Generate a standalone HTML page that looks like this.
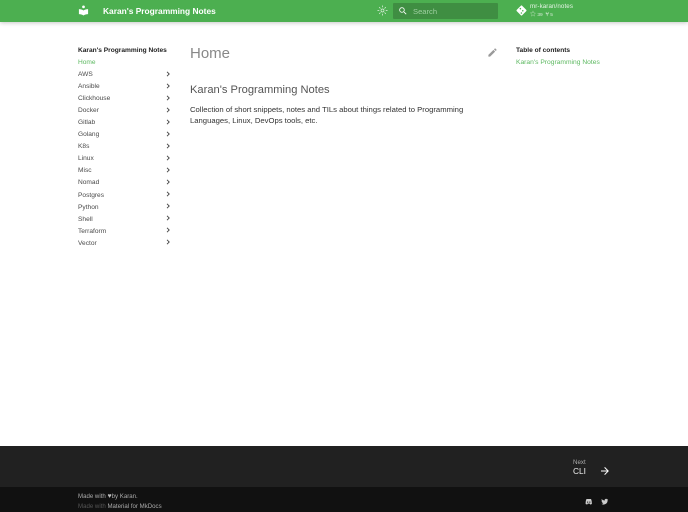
<!DOCTYPE html>
<html><head><meta charset="utf-8"><style>
html,body{margin:0;padding:0;width:688px;height:512px;overflow:hidden;background:#fff}
body{font-family:"Liberation Sans","Noto Sans CJK SC",sans-serif;position:relative}
.a{position:absolute;white-space:nowrap;line-height:12px}
.n{font-size:6.600px;color:#4a4a4a;left:78px}
svg{position:absolute}
.c{left:166px;width:4px;height:6px}
</style></head><body>
<div class="a" style="left:0;top:0;width:688px;height:22px;background:#4caf50;box-shadow:0 1px 4px rgba(0,0,0,.22)"></div>
<svg style="left:78px;top:5px" width="11" height="11" viewBox="0 0 24 24"><circle cx="12" cy="4" r="3" fill="#fff"/><path fill="#fff" d="M2 9c4 0 7 1 10 3 3-2 6-3 10-3v11c-4 0-7 1-10 3-3-2-6-3-10-3z"/></svg>
<div class="a" style="left:103px;top:5px;font-size:8.400px;font-weight:700;color:#fff;line-height:12px">Karan's Programming Notes</div>
<svg style="left:377px;top:5px" width="11" height="11" viewBox="0 0 24 24"><path fill="#e3f2e3" d="M12 8a4 4 0 1 0 0 8 4 4 0 0 0 0-8zm0 6.500a2.500 2.500 0 1 1 0-5 2.500 2.500 0 0 1 0 5zM11.200 1h1.600v4h-1.600zM11.200 19h1.600v4h-1.600zM1 11.200h4v1.600H1zM19 11.200h4v1.600h-4zM4.200 5.300l1.100-1.100 2.800 2.800-1.100 1.100zM15.900 17l1.100-1.100 2.800 2.800-1.100 1.100zM4.200 18.700L7 15.900 8.100 17l-2.800 2.800zM15.900 7l2.800-2.800 1.100 1.100L17 8.100z"/></svg>
<div class="a" style="left:393px;top:3px;width:105px;height:16px;background:#3f8e42;border-radius:1px"></div>
<svg style="left:398px;top:6px" width="10" height="10" viewBox="0 0 24 24"><path fill="#fff" d="M9.500 3A6.500 6.500 0 0 1 16 9.500c0 1.600-.6 3.100-1.600 4.200l.3.300h.8l5 5-1.500 1.500-5-5v-.8l-.3-.3A6.500 6.500 0 1 1 9.500 3zm0 2a4.500 4.500 0 1 0 0 9 4.500 4.500 0 0 0 0-9z"/></svg>
<div class="a" style="left:413px;top:5.500px;font-size:7.600px;color:#9fcfa1">Search</div>
<svg style="left:516px;top:5px" width="11" height="11" viewBox="0 0 24 24"><path fill="#fff" fill-rule="evenodd" d="M13.400 1.600a2 2 0 0 0-2.800 0l-9 9a2 2 0 0 0 0 2.800l9 9a2 2 0 0 0 2.800 0l9-9a2 2 0 0 0 0-2.800zM9.500 6.300a1.700 1.700 0 1 1 0 3.400 1.700 1.700 0 0 1 0-3.400zM11.800 15.800a1.700 1.700 0 1 1 0 3.400 1.700 1.700 0 0 1 0-3.400zM14.800 10.800a1.700 1.700 0 1 1 0 3.400 1.700 1.700 0 0 1 0-3.400z"/></svg>
<div class="a" style="left:530px;top:1px;font-size:6.200px;color:#e6f3e6;letter-spacing:.1px">mr-karan/notes</div>
<div class="a" style="left:530px;top:9px;font-size:4.800px;color:#d5ead5"><span style="font-size:6px">☆</span> 39 &nbsp;<b style="font-size:6px">⑂</b> 5</div>

<div class="a" style="left:78px;top:45px;font-size:6.600px;font-weight:700;color:#222">Karan's Programming Notes</div>
<div class="a n" style="top:57px;color:#5cb860">Home</div>
<div class="a n" style="top:69px">AWS</div>
<div class="a n" style="top:81px">Ansible</div>
<div class="a n" style="top:93px">Clickhouse</div>
<div class="a n" style="top:105px">Docker</div>
<div class="a n" style="top:117px">Gitlab</div>
<div class="a n" style="top:129px">Golang</div>
<div class="a n" style="top:141px">K8s</div>
<div class="a n" style="top:153px">Linux</div>
<div class="a n" style="top:165.400px">Misc</div>
<div class="a n" style="top:177.400px">Nomad</div>
<div class="a n" style="top:189.600px">Postgres</div>
<div class="a n" style="top:201.600px">Python</div>
<div class="a n" style="top:213.800px">Shell</div>
<div class="a n" style="top:225.800px">Terraform</div>
<div class="a n" style="top:238px">Vector</div>
<svg class="c" style="top:70.500px" viewBox="0 0 4 6"><path d="M1 .8L3.200 3 1 5.200" fill="none" stroke="#444" stroke-width=".9"/></svg>
<svg class="c" style="top:82.500px" viewBox="0 0 4 6"><path d="M1 .8L3.200 3 1 5.200" fill="none" stroke="#444" stroke-width=".9"/></svg>
<svg class="c" style="top:94.600px" viewBox="0 0 4 6"><path d="M1 .8L3.200 3 1 5.200" fill="none" stroke="#444" stroke-width=".9"/></svg>
<svg class="c" style="top:106.600px" viewBox="0 0 4 6"><path d="M1 .8L3.200 3 1 5.200" fill="none" stroke="#444" stroke-width=".9"/></svg>
<svg class="c" style="top:118.700px" viewBox="0 0 4 6"><path d="M1 .8L3.200 3 1 5.200" fill="none" stroke="#444" stroke-width=".9"/></svg>
<svg class="c" style="top:130.700px" viewBox="0 0 4 6"><path d="M1 .8L3.200 3 1 5.200" fill="none" stroke="#444" stroke-width=".9"/></svg>
<svg class="c" style="top:142.800px" viewBox="0 0 4 6"><path d="M1 .8L3.200 3 1 5.200" fill="none" stroke="#444" stroke-width=".9"/></svg>
<svg class="c" style="top:154.800px" viewBox="0 0 4 6"><path d="M1 .8L3.200 3 1 5.200" fill="none" stroke="#444" stroke-width=".9"/></svg>
<svg class="c" style="top:166.900px" viewBox="0 0 4 6"><path d="M1 .8L3.200 3 1 5.200" fill="none" stroke="#444" stroke-width=".9"/></svg>
<svg class="c" style="top:178.900px" viewBox="0 0 4 6"><path d="M1 .8L3.200 3 1 5.200" fill="none" stroke="#444" stroke-width=".9"/></svg>
<svg class="c" style="top:191px" viewBox="0 0 4 6"><path d="M1 .8L3.200 3 1 5.200" fill="none" stroke="#444" stroke-width=".9"/></svg>
<svg class="c" style="top:203px" viewBox="0 0 4 6"><path d="M1 .8L3.200 3 1 5.200" fill="none" stroke="#444" stroke-width=".9"/></svg>
<svg class="c" style="top:215.100px" viewBox="0 0 4 6"><path d="M1 .8L3.200 3 1 5.200" fill="none" stroke="#444" stroke-width=".9"/></svg>
<svg class="c" style="top:227.100px" viewBox="0 0 4 6"><path d="M1 .8L3.200 3 1 5.200" fill="none" stroke="#444" stroke-width=".9"/></svg>
<svg class="c" style="top:239.200px" viewBox="0 0 4 6"><path d="M1 .8L3.200 3 1 5.200" fill="none" stroke="#444" stroke-width=".9"/></svg>

<div class="a" style="left:190px;top:44px;font-size:15px;line-height:20px;color:#888">Home</div>
<svg style="left:487px;top:47px" width="11" height="11" viewBox="0 0 24 24"><path fill="#9a9a9a" d="M20.700 7a1 1 0 0 0 0-1.400l-2.300-2.300a1 1 0 0 0-1.400 0l-1.800 1.800 3.700 3.700zM3 17.300V21h3.700L17.800 10l-3.700-3.800z"/></svg>
<div class="a" style="left:190px;top:81.500px;font-size:11.150px;line-height:16px;color:#555">Karan's Programming Notes</div>
<div class="a" style="left:190px;top:103.500px;font-size:7.680px;color:#333">Collection of short snippets, notes and TILs about things related to Programming</div>
<div class="a" style="left:190px;top:114.500px;font-size:7.680px;color:#333">Languages, Linux, DevOps tools, etc.</div>

<div class="a" style="left:516px;top:45px;font-size:6.600px;font-weight:700;color:#222">Table of contents</div>
<div class="a" style="left:516px;top:57px;font-size:6.700px;color:#5cb860">Karan's Programming Notes</div>

<div class="a" style="left:0;top:446px;width:688px;height:41px;background:#212121"></div>
<div class="a" style="left:0;top:487px;width:688px;height:25px;background:#111"></div>
<div class="a" style="left:573px;top:456.500px;font-size:6.200px;color:#aaa">Next</div>
<div class="a" style="left:573px;top:465px;font-size:8.300px;color:#eee">CLI</div>
<svg style="left:599px;top:465px" width="12" height="12" viewBox="0 0 24 24"><path fill="#fff" d="M4 11v2h12l-5.500 5.500 1.400 1.400L19.800 12l-7.900-7.900-1.400 1.400L16 11z"/></svg>
<div class="a" style="left:78px;top:490.500px;font-size:6.100px;color:#aaa">Made with <span style="color:#bbb;font-size:7px">♥</span>by Karan.</div>
<div class="a" style="left:78px;top:500.500px;font-size:6.100px;color:#555">Made with <span style="color:#aaa">Material for MkDocs</span></div>
<svg style="left:585px;top:498px" width="7.500" height="7.500" viewBox="0 0 24 24"><path fill="#ccc" d="M5 3h14c1.500 2.500 3 6 3 16l-5 2-1.500-3h-7L7 21l-5-2C2 9 3.500 5.500 5 3zm3.500 8a2 2 0 1 0 0 4 2 2 0 0 0 0-4zm7 0a2 2 0 1 0 0 4 2 2 0 0 0 0-4z"/></svg>
<svg style="left:601px;top:498px" width="7.500" height="7.500" viewBox="0 0 24 24"><path fill="#ccc" d="M23 5c-.8.400-1.700.600-2.600.700.900-.600 1.600-1.400 2-2.500-.9.500-1.800.900-2.900 1.100A4.500 4.500 0 0 0 11.700 8.400 12.900 12.900 0 0 1 2.400 3.600 4.500 4.500 0 0 0 3.800 9.700c-.7 0-1.400-.2-2-.6 0 2.200 1.500 4.100 3.600 4.500-.7.200-1.400.2-2 .1.600 1.800 2.300 3.100 4.200 3.200A9.100 9.100 0 0 1 1 18.800 12.900 12.900 0 0 0 21 7.400c.8-.6 1.500-1.400 2-2.400z"/></svg>
</body></html>
